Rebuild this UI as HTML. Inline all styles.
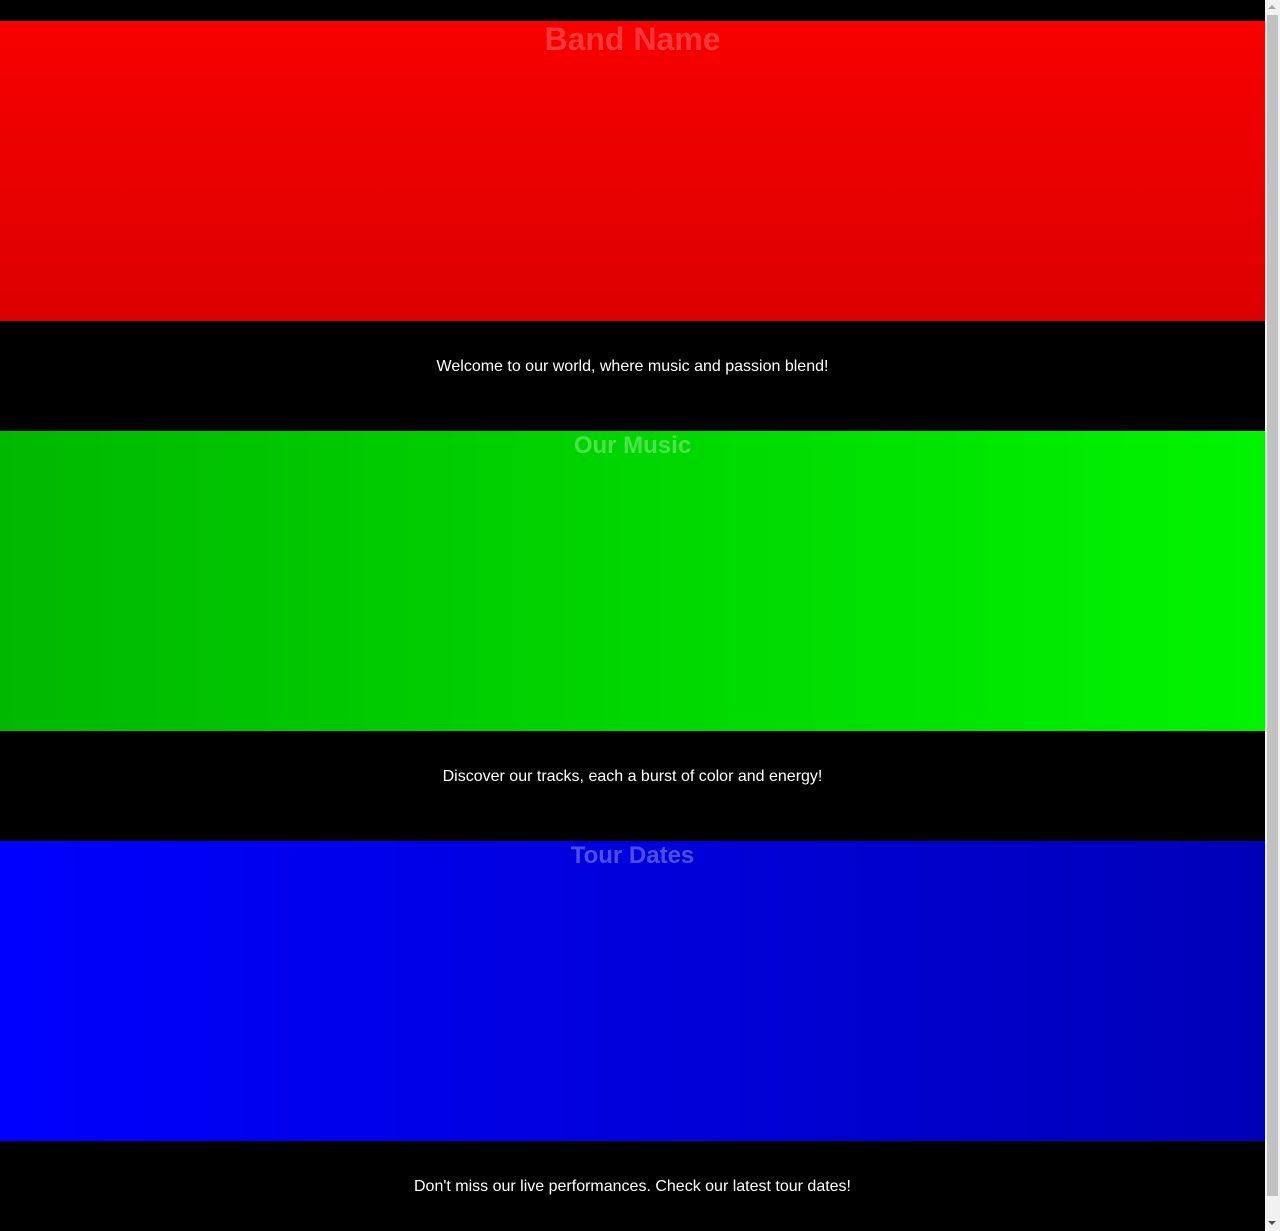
<!DOCTYPE html>
<html><head><meta charset="utf-8"><style>
html,body{margin:0;padding:0;background:#000;width:1280px;height:1231px;overflow:hidden;font-family:"Liberation Sans",Arial,sans-serif}
.band{position:absolute;left:0;width:1265px;height:300px;text-align:center}
.band h1{margin:0;font-size:32px;line-height:37px;font-weight:bold;color:rgba(255,255,255,0.22)}
.band h2{margin:0;font-size:24px;line-height:28px;font-weight:bold;color:rgba(255,255,255,0.3)}
.p{position:absolute;left:0;width:1265px;text-align:center;color:#fff;font-size:16px;line-height:18px}
#sb{position:absolute;right:0;top:0;width:15px;height:1231px;background:#f1f1f1}
#th{position:absolute;left:2px;top:15px;width:11px;height:1181px;background:#c1c1c1}
.ar{position:absolute;left:3px;width:0;height:0;border-left:4px solid transparent;border-right:4px solid transparent}
</style></head><body>
<div class="band" style="top:21px;background:linear-gradient(to bottom,#f80000,#dc0000)"><h1>Band Name</h1></div>
<div class="p" style="top:358px">Welcome to our world, where music and passion blend!</div>
<div class="band" style="top:431px;background:linear-gradient(to right,#00b800,#00f400)"><h2 style="padding-top:1px">Our Music</h2></div>
<div class="p" style="top:768px">Discover our tracks, each a burst of color and energy!</div>
<div class="band" style="top:841px;background:linear-gradient(to right,#0000ff,#0000b8)"><h2 style="padding-top:1px">Tour Dates</h2></div>
<div class="p" style="top:1178px">Don't miss our live performances. Check our latest tour dates!</div>
<div id="sb"><div class="ar" style="top:5px;border-bottom:4px solid #a3a3a3"></div><div id="th"></div><div class="ar" style="top:1221px;border-top:4px solid #505050"></div></div>
</body></html>
